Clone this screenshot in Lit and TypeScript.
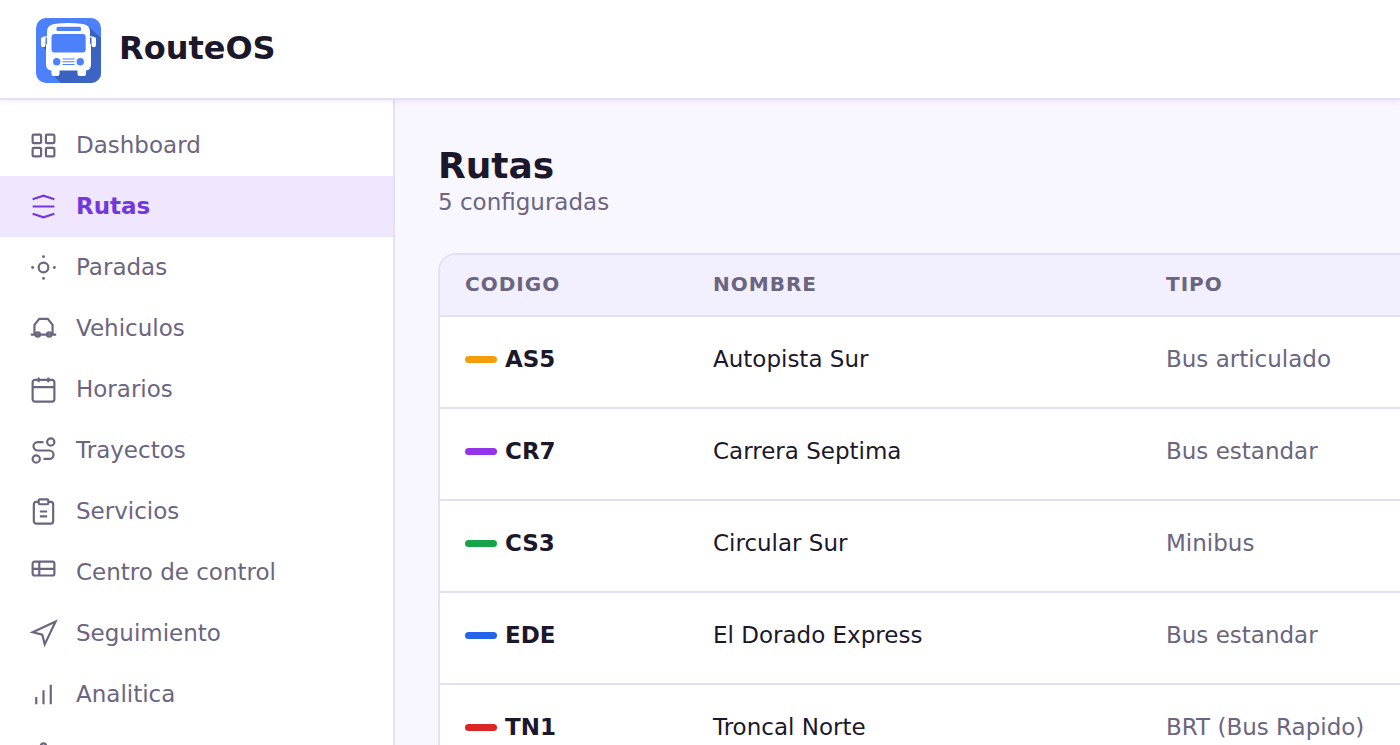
import { LitElement, html, css, svg } from "lit";
import { customElement } from "lit/decorators.js";
import { classMap } from "lit/directives/class-map.js";

interface NavItem {
  label: string;
  icon: unknown;
}

interface Route {
  code: string;
  name: string;
  type: string;
  color: string;
}

const NAV: NavItem[] = [
  {
    label: "Dashboard",
    icon: svg`<rect x="3" y="3" width="7" height="7" rx="1"/><rect x="14" y="3" width="7" height="7" rx="1"/><rect x="3" y="14" width="7" height="7" rx="1"/><rect x="14" y="14" width="7" height="7" rx="1"/>`,
  },
  { label: "Rutas", icon: svg`<path d="M3 6l9-3 9 3M3 12h18M3 18l9 3 9-3"/>` },
  {
    label: "Paradas",
    icon: svg`<circle cx="12" cy="12" r="4"/><g fill="currentColor" stroke="none"><circle cx="12" cy="3" r="1.2"/><circle cx="21" cy="12" r="1.2"/><circle cx="12" cy="21" r="1.2"/><circle cx="3" cy="12" r="1.2"/></g>`,
  },
  {
    label: "Vehiculos",
    icon: svg`<path d="M4.500 17V9l4-5h7l4 5v8M1.500 17h21"/><circle cx="7.300" cy="17" r="1.800"/><circle cx="16.700" cy="17" r="1.800"/>`,
  },
  {
    label: "Horarios",
    icon: svg`<rect x="3" y="4" width="18" height="18" rx="2"/><path d="M3 10h18M8 2v4M16 2v4"/>`,
  },
  {
    label: "Trayectos",
    icon: svg`<circle cx="6" cy="19" r="3"/><circle cx="18" cy="5" r="3"/><path d="M12 19h4.800a3.500 3.500 0 0 0 0-7H7.200a3.500 3.500 0 0 1 0-7H12"/>`,
  },
  {
    label: "Servicios",
    icon: svg`<path d="M16 4h2a2 2 0 0 1 2 2v14a2 2 0 0 1-2 2H6a2 2 0 0 1-2-2V6a2 2 0 0 1 2-2h2"/><rect x="8" y="2" width="8" height="4" rx="1"/><path d="M9 12h6M9 16h6"/>`,
  },
  {
    label: "Centro de control",
    icon: svg`<rect x="3" y="3" width="18" height="11.500" rx="1.500"/><path d="M3 9h18M8.500 3v11.500"/>`,
  },
  { label: "Seguimiento", icon: svg`<path d="M3 11l19-9-9 19-2-8z"/>` },
  { label: "Analitica", icon: svg`<path d="M18 20V4M12 20V8.500M6 20v-6"/>` },
  {
    label: "Ajustes",
    icon: svg`<circle cx="12" cy="12" r="3"/><path d="M12.220 2h-.440a2 2 0 0 0-2 2v.180a2 2 0 0 1-1 1.730l-.430.250a2 2 0 0 1-2 0l-.150-.080a2 2 0 0 0-2.730.730l-.220.380a2 2 0 0 0 .730 2.730l.150.100a2 2 0 0 1 1 1.720v.510a2 2 0 0 1-1 1.740l-.150.090a2 2 0 0 0-.730 2.730l.220.380a2 2 0 0 0 2.730.730l.150-.080a2 2 0 0 1 2 0l.430.250a2 2 0 0 1 1 1.730V20a2 2 0 0 0 2 2h.440a2 2 0 0 0 2-2v-.180a2 2 0 0 1 1-1.730l.430-.250a2 2 0 0 1 2 0l.150.080a2 2 0 0 0 2.730-.730l.220-.390a2 2 0 0 0-.730-2.730l-.150-.080a2 2 0 0 1-1-1.740v-.500a2 2 0 0 1 1-1.740l.150-.090a2 2 0 0 0 .730-2.730l-.220-.380a2 2 0 0 0-2.730-.730l-.150.080a2 2 0 0 1-2 0l-.430-.250a2 2 0 0 1-1-1.730V4a2 2 0 0 0-2-2z"/>`,
  },
];

const ROUTES: Route[] = [
  { code: "AS5", name: "Autopista Sur", type: "Bus articulado", color: "#f59e0b" },
  { code: "CR7", name: "Carrera Septima", type: "Bus estandar", color: "#9333ea" },
  { code: "CS3", name: "Circular Sur", type: "Minibus", color: "#16a34a" },
  { code: "EDE", name: "El Dorado Express", type: "Bus estandar", color: "#2563eb" },
  { code: "TN1", name: "Troncal Norte", type: "BRT (Bus Rapido)", color: "#dc2626" },
];

@customElement("route-logo")
export class RouteLogo extends LitElement {
  static styles = css`
    :host {
      display: block;
      width: 65px;
      height: 65px;
    }
    svg {
      display: block;
    }
  `;

  render() {
    return html`<svg width="65" height="65" viewBox="0 0 65 65" aria-hidden="true">
      <defs>
        <clipPath id="tile"><rect width="65" height="65" rx="10" /></clipPath>
        <linearGradient id="shade" x1="0" y1="0" x2="1" y2="1">
          <stop offset="0" stop-color="#355cb8" />
          <stop offset="1" stop-color="#3d66c6" />
        </linearGradient>
      </defs>
      <g clip-path="url(#tile)">
        <rect width="65" height="65" fill="#4d80fb" />
        <path d="M52 8L65 20V65H25L16 56L30 30z" fill="url(#shade)" />
        <path d="M6 28L11 33V24z" fill="#355cb8" />
        <g fill="#fff">
          <path d="M18 6Q32 4 47 6Q54 7 54 14V25L55 27V46Q55 52 50 52.500V56Q50 58 48 58H43.500Q41.500 58 41.500 56V52.500H23.500V56Q23.500 58 21.500 58H17.500Q15.500 58 15.500 56V52.500Q10 52 10 46V27L11 25V14Q11 7 18 6z" />
          <path d="M5 21Q5 19 7 19H9.500V27Q9.500 29.300 7 29.300Q5 29.300 5 27zM55.500 19H58Q60 19 60 21V27Q60 29.300 58 29.300Q55.500 29.300 55.500 27z" />
        </g>
        <path d="M7 20Q8 18.700 12 18.700M58 20Q57 18.700 53 18.700" fill="none" stroke="#fff" stroke-width="1.200" />
        <g fill="#4d80fb">
          <rect x="20.500" y="8.700" width="24.500" height="4.300" rx="1.500" />
          <rect x="15.500" y="16" width="34.200" height="18.500" rx="3" />
          <circle cx="20.700" cy="43.700" r="3.700" />
          <circle cx="44.300" cy="43.700" r="3.700" />
          <path d="M26.500 40.500h12v1h-12zM26.500 43.200h12v1h-12zM26.500 46h12v1h-12z" />
        </g>
      </g>
    </svg>`;
  }
}

@customElement("app-root")
export class AppRoot extends LitElement {
  static styles = css`
    :host {
      display: flex;
      flex-direction: column;
      height: 100vh;
      overflow: hidden;
      background: #f8f6fe;
      color: #1c182b;
      font: 23px/28px "DejaVu Sans", sans-serif;
    }
    .topbar {
      display: flex;
      align-items: center;
      gap: 18px;
      flex: none;
      padding: 18px 36px 15px;
      background: #fff;
      border-bottom: 2px solid #e3dff4;
      box-shadow: 0 2px 5px rgba(109, 40, 217, 0.08);
      z-index: 1;
    }
    .brand {
      font-size: 32px;
      line-height: 40px;
      font-weight: 700;
      padding-bottom: 5px;
    }
    .body {
      display: flex;
      flex: 1;
      min-height: 0;
    }
    .sidebar {
      flex: none;
      width: 393px;
      padding-top: 15px;
      background: #fff;
      border-right: 2px solid #e3dff4;
      overflow: hidden;
    }
    .link {
      display: flex;
      align-items: center;
      gap: 18px;
      height: 61px;
      padding: 0 29px;
      color: #6b6580;
      text-decoration: none;
    }
    .label {
      padding-bottom: 2px;
    }
    .active {
      background: #f0e6fe;
      color: #7237de;
      font-weight: 700;
    }
    .icon {
      flex: none;
      fill: none;
      stroke: currentColor;
      stroke-width: 1.8;
    }
    .main {
      flex: 1;
      min-width: 0;
      padding: 44px 43px;
      overflow: hidden;
    }
    .title {
      margin: 0;
      font-size: 36px;
      line-height: 44px;
      font-weight: 700;
    }
    .count {
      margin: 0 0 37px;
      color: #6b6580;
    }
    .card {
      min-width: 1240px;
      border: 2px solid #e3dff4;
      border-radius: 18px;
      background: #fff;
      overflow: hidden;
    }
    .routes {
      width: 100%;
      border-collapse: separate;
      border-spacing: 0;
      table-layout: fixed;
    }
    .routes th,
    .routes td {
      box-sizing: border-box;
      padding: 0 25px;
      text-align: left;
      border-bottom: 2px solid #e3dff4;
    }
    .routes th {
      height: 62px;
      padding-bottom: 2px;
      background: #f2effe;
      color: #6b6580;
      font-size: 20px;
      line-height: 24px;
      letter-spacing: 1px;
    }
    .routes td {
      height: 92px;
      padding-bottom: 6px;
    }
    .col-code {
      width: 248px;
    }
    .col-name {
      width: 453px;
    }
    .code {
      display: flex;
      align-items: center;
      gap: 8px;
      font-weight: 700;
    }
    .swatch {
      width: 32px;
      height: 7px;
      border-radius: 4px;
    }
    .type {
      color: #6b6580;
    }
  `;

  render() {
    return html`
      <header class="topbar">
        <route-logo></route-logo>
        <span class="brand">RouteOS</span>
      </header>
      <div class="body">
        <nav class="sidebar">
          ${NAV.map(
            (item) => html`<a href="#" class=${classMap({ link: true, active: item.label === "Rutas" })}>
              <svg class="icon" width="29" height="29" viewBox="0 0 24 24" aria-hidden="true">${item.icon}</svg>
              <span class="label">${item.label}</span>
            </a>`,
          )}
        </nav>
        <main class="main">
          <h1 class="title">Rutas</h1>
          <p class="count">${ROUTES.length} configuradas</p>
          <div class="card">
            <table class="routes">
              <thead>
                <tr>
                  <th class="col-code">CODIGO</th>
                  <th class="col-name">NOMBRE</th>
                  <th>TIPO</th>
                </tr>
              </thead>
              <tbody>
                ${ROUTES.map(
                  (r) => html`<tr>
                    <td>
                      <div class="code"><span class="swatch" style="background:${r.color}"></span>${r.code}</div>
                    </td>
                    <td>${r.name}</td>
                    <td class="type">${r.type}</td>
                  </tr>`,
                )}
              </tbody>
            </table>
          </div>
        </main>
      </div>
    `;
  }
}
